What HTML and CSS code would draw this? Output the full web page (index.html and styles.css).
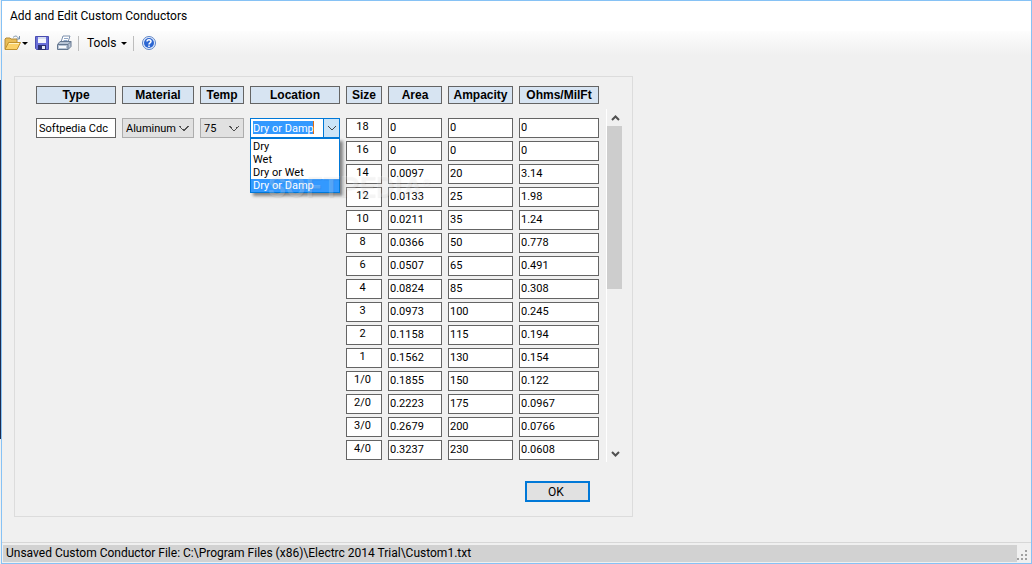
FILE: index.html
```
<!DOCTYPE html>
<html lang="en">
<head>
  <meta charset="UTF-8">
  <meta name="viewport" content="width=device-width, initial-scale=1.0">
  <title>Add and Edit Custom Conductors</title>
  <link rel="stylesheet" href="styles.css">
</head>
<body>
  <div class="window">
    <h1 class="title">Add and Edit Custom Conductors</h1>

    <div class="toolbar">
      <button class="tool" aria-label="Open">
        <svg width="18" height="16" viewBox="0 0 18 16">
          <path d="M1 14V4l1-1h4l1 1h6v3" fill="#e9bd55" stroke="#b08a3c"/>
          <path d="M1 14.500L4.500 7.500h12L13 14.500z" fill="#fbd167" stroke="#c0922f"/>
          <path d="M5 8.500h10" stroke="#fff3c4"/>
          <path d="M9 2.500c2-2 4-2 5.500 1M15.500 1v3h-3" fill="none" stroke="#7890a8"/>
        </svg>
        <span class="arrow"></span>
      </button>
      <button class="tool" aria-label="Save">
        <svg width="16" height="16" viewBox="0 0 16 16">
          <path d="M1.500 1.500h13v13h-12l-1-1z" fill="#6a6fd8" stroke="#4a4db0"/>
          <path d="M4 2h8v6H4z" fill="#f4f6fc"/>
          <path d="M4 2h8v2H4z" fill="#d5dcf0"/>
          <path d="M4 10h8v5H4z" fill="#2b3070"/>
          <path d="M8 11h3v3H8z" fill="#e8ebf5"/>
        </svg>
      </button>
      <button class="tool" aria-label="Print">
        <svg width="16" height="16" viewBox="0 0 16 16">
          <path d="M5 7L7 1h7l-2 6z" fill="#fff" stroke="#7c90ad"/>
          <path d="M8 3.500h4M7.500 5.500h4" stroke="#8ea6c8"/>
          <path d="M1.500 9.500L4 6.500h11v5l-3 3H1.500z" fill="#b9c5d6" stroke="#64778f"/>
          <path d="M2 9.500h10l3-3M12 9.500v5" fill="none" stroke="#64778f"/>
          <path d="M3 12h7" stroke="#f8fafc" stroke-width="2"/>
        </svg>
      </button>
      <span class="separator"></span>
      <button class="tool tools-menu">Tools <span class="arrow"></span></button>
      <span class="separator"></span>
      <button class="tool" aria-label="Help">
        <svg width="14" height="14" viewBox="0 0 14 14">
          <circle cx="7" cy="7" r="6.500" fill="#e8f0fc" stroke="#5b82c6"/>
          <circle cx="7" cy="7" r="5" fill="#2c66d2"/>
          <path d="M5 5.500c0-2.500 4-2.500 4 0C9 7 7 6.800 7 8.500M7 9.500V11" fill="none" stroke="#fff" stroke-width="1.500"/>
        </svg>
      </button>
    </div>

    <main class="content">
      <form class="panel">
        <div class="editor">
          <div class="field type">
            <label class="heading" for="type">Type</label>
            <input class="box" id="type" type="text" value="Softpedia Cdc">
          </div>
          <div class="field material">
            <label class="heading" for="material">Material</label>
            <select class="combo" id="material">
              <option>Aluminum</option>
              <option>Copper</option>
            </select>
          </div>
          <div class="field temp">
            <label class="heading" for="temp">Temp</label>
            <select class="combo" id="temp">
              <option>60</option>
              <option selected>75</option>
              <option>90</option>
            </select>
          </div>
          <div class="field location">
            <label class="heading" for="location">Location</label>
            <div class="combo-edit">
              <input id="location" type="text" role="combobox" aria-expanded="true" aria-controls="locations" value="Dry or Damp">
              <button type="button" aria-label="Show locations">
                <svg width="10" height="6" viewBox="0 0 10 6"><path d="M1 1l4 4 4-4" fill="none" stroke="#444"/></svg>
              </button>
              <ul class="options" id="locations" role="listbox">
                <li role="option">Dry</li>
                <li role="option">Wet</li>
                <li role="option">Dry or Wet</li>
                <li role="option" class="active" aria-selected="true">Dry or Damp</li>
              </ul>
            </div>
          </div>

          <table class="sizes">
            <thead>
              <tr>
                <th class="heading size">Size</th>
                <th class="heading area">Area</th>
                <th class="heading ampacity">Ampacity</th>
                <th class="heading ohms">Ohms/MilFt</th>
              </tr>
            </thead>
            <tbody id="rows"></tbody>
          </table>

          <div class="scrollbar">
            <svg width="9" height="6" viewBox="0 0 9 6"><path d="M1 5l3.500-3.500L8 5" fill="none" stroke="#505050" stroke-width="2"/></svg>
            <div class="track"><div class="thumb"></div></div>
            <svg width="9" height="6" viewBox="0 0 9 6"><path d="M1 1l3.500 3.500L8 1" fill="none" stroke="#505050" stroke-width="2"/></svg>
          </div>
          <span class="watermark">SOFTPEDIA<sup>®</sup></span>
        </div>
        <div class="actions">
          <button class="ok" type="button">OK</button>
        </div>
      </form>
    </main>

    <footer class="status">
      <span class="message">Unsaved Custom Conductor File: C:\Program Files (x86)\Electrc 2014 Trial\Custom1.txt</span>
      <svg class="grip" width="12" height="12" viewBox="0 0 12 12"><path d="M8 0h2v2H8zM4 4h2v2H4zM8 4h2v2H8zM0 8h2v2H0zM4 8h2v2H4zM8 8h2v2H8z" fill="#a0a0a0"/></svg>
    </footer>
  </div>

  <script src="script.js"></script>
</body>
</html>
```
FILE: styles.css
```
* {
  box-sizing: border-box;
}

body {
  margin: 0;
  padding: 0 0 0 1px;
  background: linear-gradient(#1c2b4f, #1c2b4f) 0 80px / 1px 359px no-repeat #f0f0f0;
  font-family: Roboto, "Liberation Sans", Arial, sans-serif;
  font-size: 11px;
  color: #000;
}

button,
input,
select {
  font: inherit;
  color: inherit;
  border-radius: 0;
  outline: none;
}

.window {
  display: flex;
  flex-direction: column;
  min-height: 100vh;
  border: 1px solid #86c2f5;
  background: #f0f0f0;
}

.title,
.toolbar,
.status {
  font-size: 12px;
  font-weight: normal;
}

.title {
  margin: 0;
  padding: 0 8px;
  background: #fff;
  line-height: 30px;
}

.toolbar {
  display: flex;
  align-items: center;
  height: 24px;
  padding: 0 2px;
  background: linear-gradient(#fdfdfd, #f0f0f0);
}

.tool {
  display: flex;
  align-items: center;
  margin-right: 6px;
  padding: 0;
  border: none;
  background: none;
}

.arrow {
  border: 3px solid transparent;
  border-top-color: #000;
  border-bottom: none;
}

.tools-menu {
  gap: 5px;
}

.separator {
  width: 1px;
  height: 15px;
  margin-right: 8px;
  background: #bdbdbd;
}

.content {
  flex: 1;
  padding: 21px 12px 20px;
}

.panel {
  width: fit-content;
  padding: 9px 10px 14px 21px;
  border: 1px solid #dcdcdc;
}

.editor {
  display: flex;
  gap: 6px;
  position: relative;
}

.field {
  display: flex;
  flex-direction: column;
  gap: 14px;
}

.heading {
  height: 18px;
  padding: 0;
  border: 1px solid #646464;
  background: #d7e4f2;
  font-family: "Liberation Sans", Arial, sans-serif;
  font-size: 12px;
  font-weight: bold;
  line-height: 16px;
  text-align: center;
}

.type {
  width: 80px;
}

.material {
  width: 72px;
}

.temp {
  width: 44px;
}

.location {
  width: 90px;
}

.box {
  display: block;
  width: 100%;
  height: 20px;
  padding: 0 2px;
  border: 1px solid #646464;
  background: #fff;
}

.combo {
  width: 100%;
  height: 20px;
  padding: 0 3px;
  border: 1px solid #adadad;
  appearance: none;
  background: #e1e1e1;
  background-image: linear-gradient(45deg, transparent 45%, #505050 45%, #505050 60%, transparent 60%), linear-gradient(-45deg, transparent 45%, #505050 45%, #505050 60%, transparent 60%);
  background-position: right 9px center, right 4px center;
  background-size: 5px 5px;
  background-repeat: no-repeat;
}

.combo-edit {
  display: flex;
  position: relative;
  height: 20px;
  border: 1px solid #0078d7;
  background: #fff;
}

.combo-edit input {
  flex: 1;
  min-width: 0;
  padding: 0 2px;
  border: none;
  background: linear-gradient(to right, #3399ff 60px, #e06c10 60px) 2px 2px / 61px 13px no-repeat;
  color: #fff;
}

.combo-edit button {
  display: flex;
  align-items: center;
  justify-content: center;
  width: 16px;
  padding: 0;
  border: none;
  border-left: 1px solid #0078d7;
  background: #cce4f7;
}

.options {
  position: absolute;
  top: 19px;
  left: -1px;
  z-index: 1;
  width: 90px;
  margin: 0;
  padding: 1px 0 0;
  border: 1px solid #0078d7;
  background: #fff;
  box-shadow: 3px 3px 3px rgba(0, 0, 0, 0.45);
  list-style: none;
}

.options li {
  padding: 0 2px;
  line-height: 13px;
}

.options .active {
  background: #3399ff;
  color: #fff;
}

.sizes {
  height: fit-content;
  margin: 0 -6px 0 -6px;
  border-collapse: separate;
  border-spacing: 6px 0;
  table-layout: fixed;
  width: 265px;
}

.sizes td {
  padding: 0 0 3px;
}

.sizes tbody::before {
  content: "";
  display: block;
  height: 14px;
}

.size {
  width: 36px;
}

.area {
  width: 54px;
}

.ampacity {
  width: 65px;
}

.ohms {
  width: 80px;
}

.sizes .box {
  padding: 0 1px 2px;
}

.sizes td:first-child .box {
  padding: 0 4px 4px 1px;
  text-align: center;
}

.scrollbar {
  display: flex;
  flex-direction: column;
  align-items: center;
  width: 17px;
  margin: 23px -1px 1px 1px;
  padding: 6px 0 5px;
  border-left: 1px solid #fff;
}

.track {
  flex: 1;
  width: 100%;
  margin: 5px 0;
}

.thumb {
  width: 15px;
  height: 51%;
  background: #cdcdcd;
}

.watermark {
  position: absolute;
  top: 84px;
  left: 232px;
  z-index: 2;
  color: rgba(255, 255, 255, 0.2);
  font-size: 29px;
  font-weight: bold;
  line-height: 34px;
  text-shadow: 1px 1px 1px rgba(0, 0, 0, 0.05);
  pointer-events: none;
}

.watermark sup {
  font-size: 10px;
  line-height: 10px;
}

.actions {
  display: flex;
  justify-content: flex-end;
  padding: 18px 32px 0 0;
}

.ok {
  width: 65px;
  height: 21px;
  padding: 0 3px 0 0;
  border: 2px solid #0078d7;
  background: #e1e1e1;
  font-size: 12px;
}

.status {
  display: flex;
  align-items: flex-end;
  padding: 2px 2px 1px 1px;
  border-top: 1px solid #d7d7d7;
}

.message {
  flex: 1;
  padding: 0 3px;
  background: #d2d2d2;
  line-height: 17px;
}
```
FILE: script.js
```
const conductors = [
  ["18", "0", "0", "0"],
  ["16", "0", "0", "0"],
  ["14", "0.0097", "20", "3.14"],
  ["12", "0.0133", "25", "1.98"],
  ["10", "0.0211", "35", "1.24"],
  ["8", "0.0366", "50", "0.778"],
  ["6", "0.0507", "65", "0.491"],
  ["4", "0.0824", "85", "0.308"],
  ["3", "0.0973", "100", "0.245"],
  ["2", "0.1158", "115", "0.194"],
  ["1", "0.1562", "130", "0.154"],
  ["1/0", "0.1855", "150", "0.122"],
  ["2/0", "0.2223", "175", "0.0967"],
  ["3/0", "0.2679", "200", "0.0766"],
  ["4/0", "0.3237", "230", "0.0608"]
];
const columns = ["Size", "Area", "Ampacity", "Ohms/MilFt"];

const rows = document.getElementById("rows");

conductors.forEach(conductor => {
  const row = document.createElement("tr");
  row.innerHTML = conductor.map((value, i) => `
    <td><input class="box" type="text" aria-label="${columns[i]}" value="${value}"></td>
  `).join("");
  rows.appendChild(row);
});
```
